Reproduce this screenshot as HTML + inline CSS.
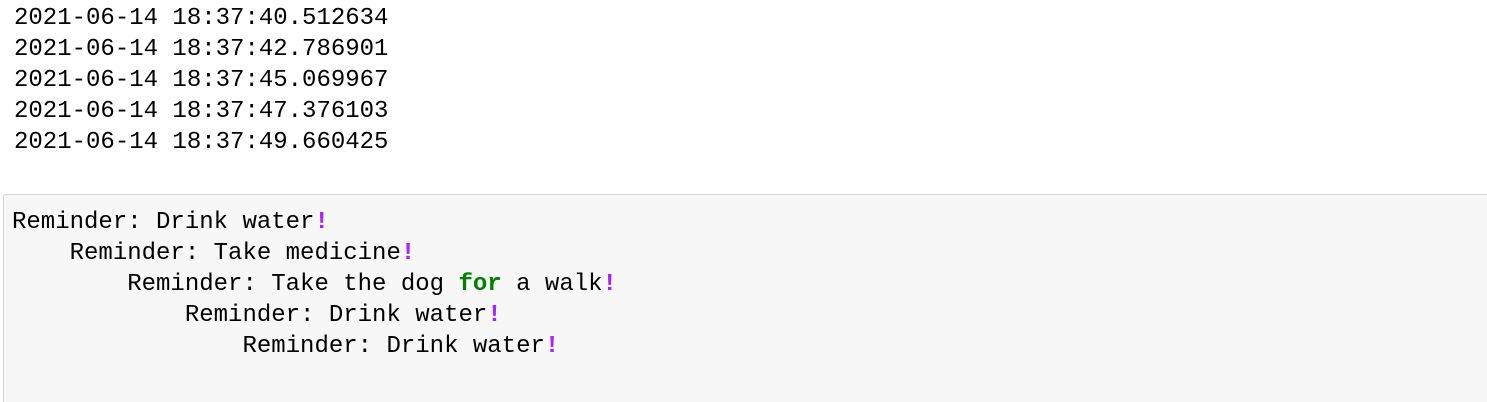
<!DOCTYPE html>
<html><head><style>
html,body{margin:0;background:#fff;width:1487px;height:402px;overflow:hidden;font-family:"Liberation Mono",monospace;font-size:24px;color:#000}
.out{position:absolute;left:14px;top:3px;line-height:31px;white-space:pre}
.box{position:absolute;left:3px;top:194px;width:1490px;height:207px;background:#f7f7f7;border:1px solid #d6d6d6;border-bottom:none;border-radius:3px 3px 0 0}
.code{position:absolute;left:12px;top:207px;line-height:31px;white-space:pre}
.p{color:#aa22ff;font-weight:bold}
.k{color:#008000;font-weight:bold}
</style></head><body>
<div class="out">2021-06-14 18:37:40.512634
2021-06-14 18:37:42.786901
2021-06-14 18:37:45.069967
2021-06-14 18:37:47.376103
2021-06-14 18:37:49.660425</div>
<div class="box"></div>
<div class="code">Reminder: Drink water<span class="p">!</span>
    Reminder: Take medicine<span class="p">!</span>
        Reminder: Take the dog <span class="k">for</span> a walk<span class="p">!</span>
            Reminder: Drink water<span class="p">!</span>
                Reminder: Drink water<span class="p">!</span></div>
</body></html>
